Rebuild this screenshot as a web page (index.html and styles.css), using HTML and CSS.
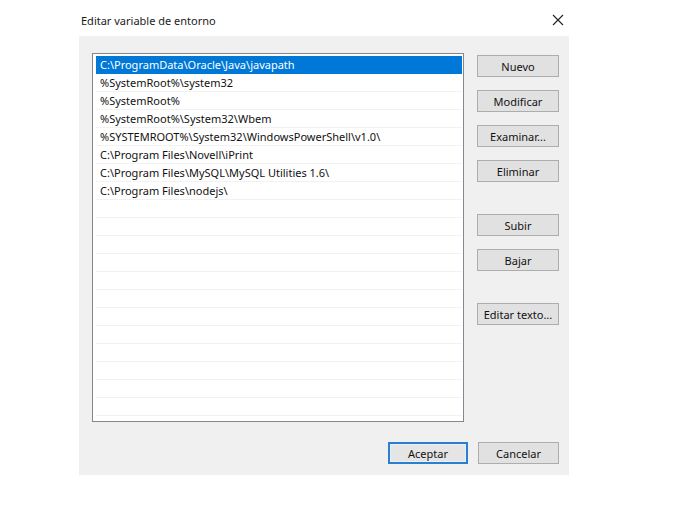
FILE: index.html
```html
<!DOCTYPE html>
<html lang="es">
<head>
<meta charset="utf-8">
<title>Editar variable de entorno</title>
<link rel="stylesheet" href="styles.css">
</head>
<body>
<div class="window">
  <div class="titlebar">
    <span class="title">Editar variable de entorno</span>
    <svg class="close" width="12" height="12" viewBox="0 0 12 12"><path d="M1 1 L11 11 M11 1 L1 11" stroke="#222" stroke-width="1.1" fill="none"/></svg>
  </div>
  <div class="panel">
    <div class="main">
      <div class="listbox">
        <div class="row selected">C:\ProgramData\Oracle\Java\javapath</div>
        <div class="row">%SystemRoot%\system32</div>
        <div class="row">%SystemRoot%</div>
        <div class="row">%SystemRoot%\System32\Wbem</div>
        <div class="row">%SYSTEMROOT%\System32\WindowsPowerShell\v1.0\</div>
        <div class="row">C:\Program Files\Novell\iPrint</div>
        <div class="row">C:\Program Files\MySQL\MySQL Utilities 1.6\</div>
        <div class="row">C:\Program Files\nodejs\</div>
        <div class="row"></div>
        <div class="row"></div>
        <div class="row"></div>
        <div class="row"></div>
        <div class="row"></div>
        <div class="row"></div>
        <div class="row"></div>
        <div class="row"></div>
        <div class="row"></div>
        <div class="row"></div>
        <div class="row"></div>
        <div class="row"></div>
        <div class="row"></div>
      </div>
      <div class="side">
        <div class="btn">Nuevo</div>
        <div class="btn">Modificar</div>
        <div class="btn">Examinar...</div>
        <div class="btn">Eliminar</div>
        <div class="btn gap-lg">Subir</div>
        <div class="btn">Bajar</div>
        <div class="btn gap-lg">Editar texto...</div>
      </div>
    </div>
    <div class="footer">
      <div class="btn default">Aceptar</div>
      <div class="btn cancel">Cancelar</div>
    </div>
  </div>
</div>
</body>
</html>
```
FILE: styles.css
```css
html, body {
  margin: 0;
  padding: 0;
  background: #ffffff;
}
body {
  font-family: "Noto Sans", "Open Sans", sans-serif;
  font-size: 11px;
  color: #000;
}
.window {
  width: 676px;
  height: 512px;
  display: flex;
  flex-direction: column;
}
.titlebar {
  height: 36px;
  display: flex;
  align-items: center;
  padding-left: 81px;
  padding-right: 112px;
  padding-top: 4px;
  box-sizing: border-box;
  justify-content: space-between;
}
.title {
  color: #1a1a1a;
}
.close {
  display: block;
}
.panel {
  margin-left: 79px;
  width: 490px;
  height: 439px;
  background: #f0f0f0;
  box-sizing: border-box;
  padding: 17px 10px 0 13px;
  display: flex;
  flex-direction: column;
}
.main {
  display: flex;
  gap: 13px;
}
.listbox {
  width: 372px;
  height: 369px;
  box-sizing: border-box;
  border: 1px solid #828790;
  background: #fff;
  padding: 2px 1px 0 3px;
  overflow: hidden;
}
.row {
  height: 18px;
  line-height: 17px;
  box-sizing: border-box;
  border-bottom: 1px solid #f2f2f2;
  padding-left: 4px;
  white-space: nowrap;
  color: #111;
}
.row.selected {
  background: #0078d7;
  color: #fff;
  border-bottom-color: #0078d7;
}
.side {
  display: flex;
  flex-direction: column;
  gap: 13px;
  padding-top: 2px;
}
.btn {
  width: 82px;
  height: 22px;
  box-sizing: border-box;
  border: 1px solid #adadad;
  background: #e1e1e1;
  display: flex;
  align-items: center;
  justify-content: center;
  color: #111;
}
.side .gap-lg {
  margin-top: 19px;
}
.footer {
  display: flex;
  justify-content: flex-end;
  gap: 10px;
  margin-top: 20px;
}
.btn.default {
  width: 80px;
  border: 2px solid #2b7fcf;
  box-shadow: inset 0 0 0 1px #e8f1fa;
  background: #e5e5e5;
}
.btn.cancel {
  width: 81px;
}
```
